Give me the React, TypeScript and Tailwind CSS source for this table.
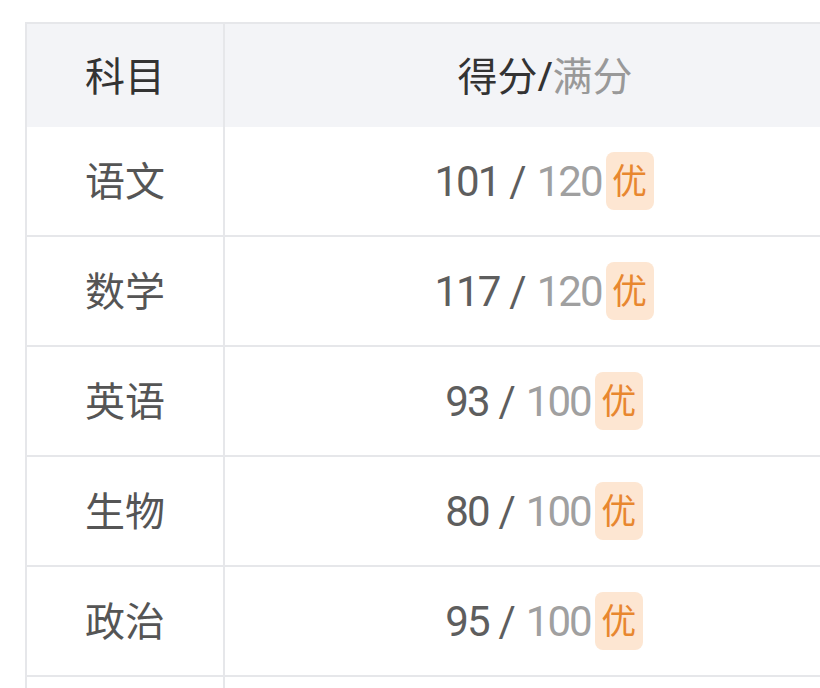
const rows = [
  { subject: "语文", score: 101, full: 120 },
  { subject: "数学", score: 117, full: 120 },
  { subject: "英语", score: 93, full: 100 },
  { subject: "生物", score: 80, full: 100 },
  { subject: "政治", score: 95, full: 100 },
];

const font = { fontFamily: '"Noto Sans", "Noto Sans CJK SC", sans-serif' };
const numFont = { fontFamily: 'Roboto, "Noto Sans CJK SC", sans-serif' };

export default function App() {
  return (
    <div className="w-[820px] h-[688px] overflow-hidden bg-white" style={font}>
      <div className="ml-[25px] mt-[22px] w-[840px] border-t-2 border-l-2 border-[#e6e7ea]">
        <div className="grid grid-cols-[198px_1fr] h-[103px] bg-[#f3f4f7]">
          <div className="flex items-center justify-center border-r-2 border-[#e6e7ea] text-[40px] text-[#333]">
            科目
          </div>
          <div className="flex items-center justify-center text-[40px] text-[#333]">
            得分/<span className="text-[#999]">满分</span>
          </div>
        </div>
        {rows.map((r) => (
          <div key={r.subject} className="grid grid-cols-[198px_1fr] h-[110px] border-b-2 border-[#e6e7ea]">
            <div className="flex items-center justify-center border-r-2 border-[#e6e7ea] text-[40px] text-[#555]">
              {r.subject}
            </div>
            <div className="flex items-center justify-center pr-[2px]">
              <span className="text-[42px] text-[#5e5e5e] tracking-[-2px]" style={numFont}>
                {r.score}
              </span>
              <span className="ml-[10px] text-[42px] text-[#5e5e5e]" style={numFont}>
                /
              </span>
              <span className="ml-[10px] text-[42px] text-[#a0a0a0] tracking-[-2px]" style={numFont}>
                {r.full}
              </span>
              <span className="ml-[4px] flex items-center justify-center w-[48px] h-[58px] rounded-[8px] bg-[#fde6d2] text-[35px] text-[#e8872f]">
                优
              </span>
            </div>
          </div>
        ))}
        {/* next row, cut off by the bottom of the window */}
        <div className="grid grid-cols-[198px_1fr] h-[110px]">
          <div className="border-r-2 border-[#e6e7ea]" />
          <div />
        </div>
      </div>
    </div>
  );
}
